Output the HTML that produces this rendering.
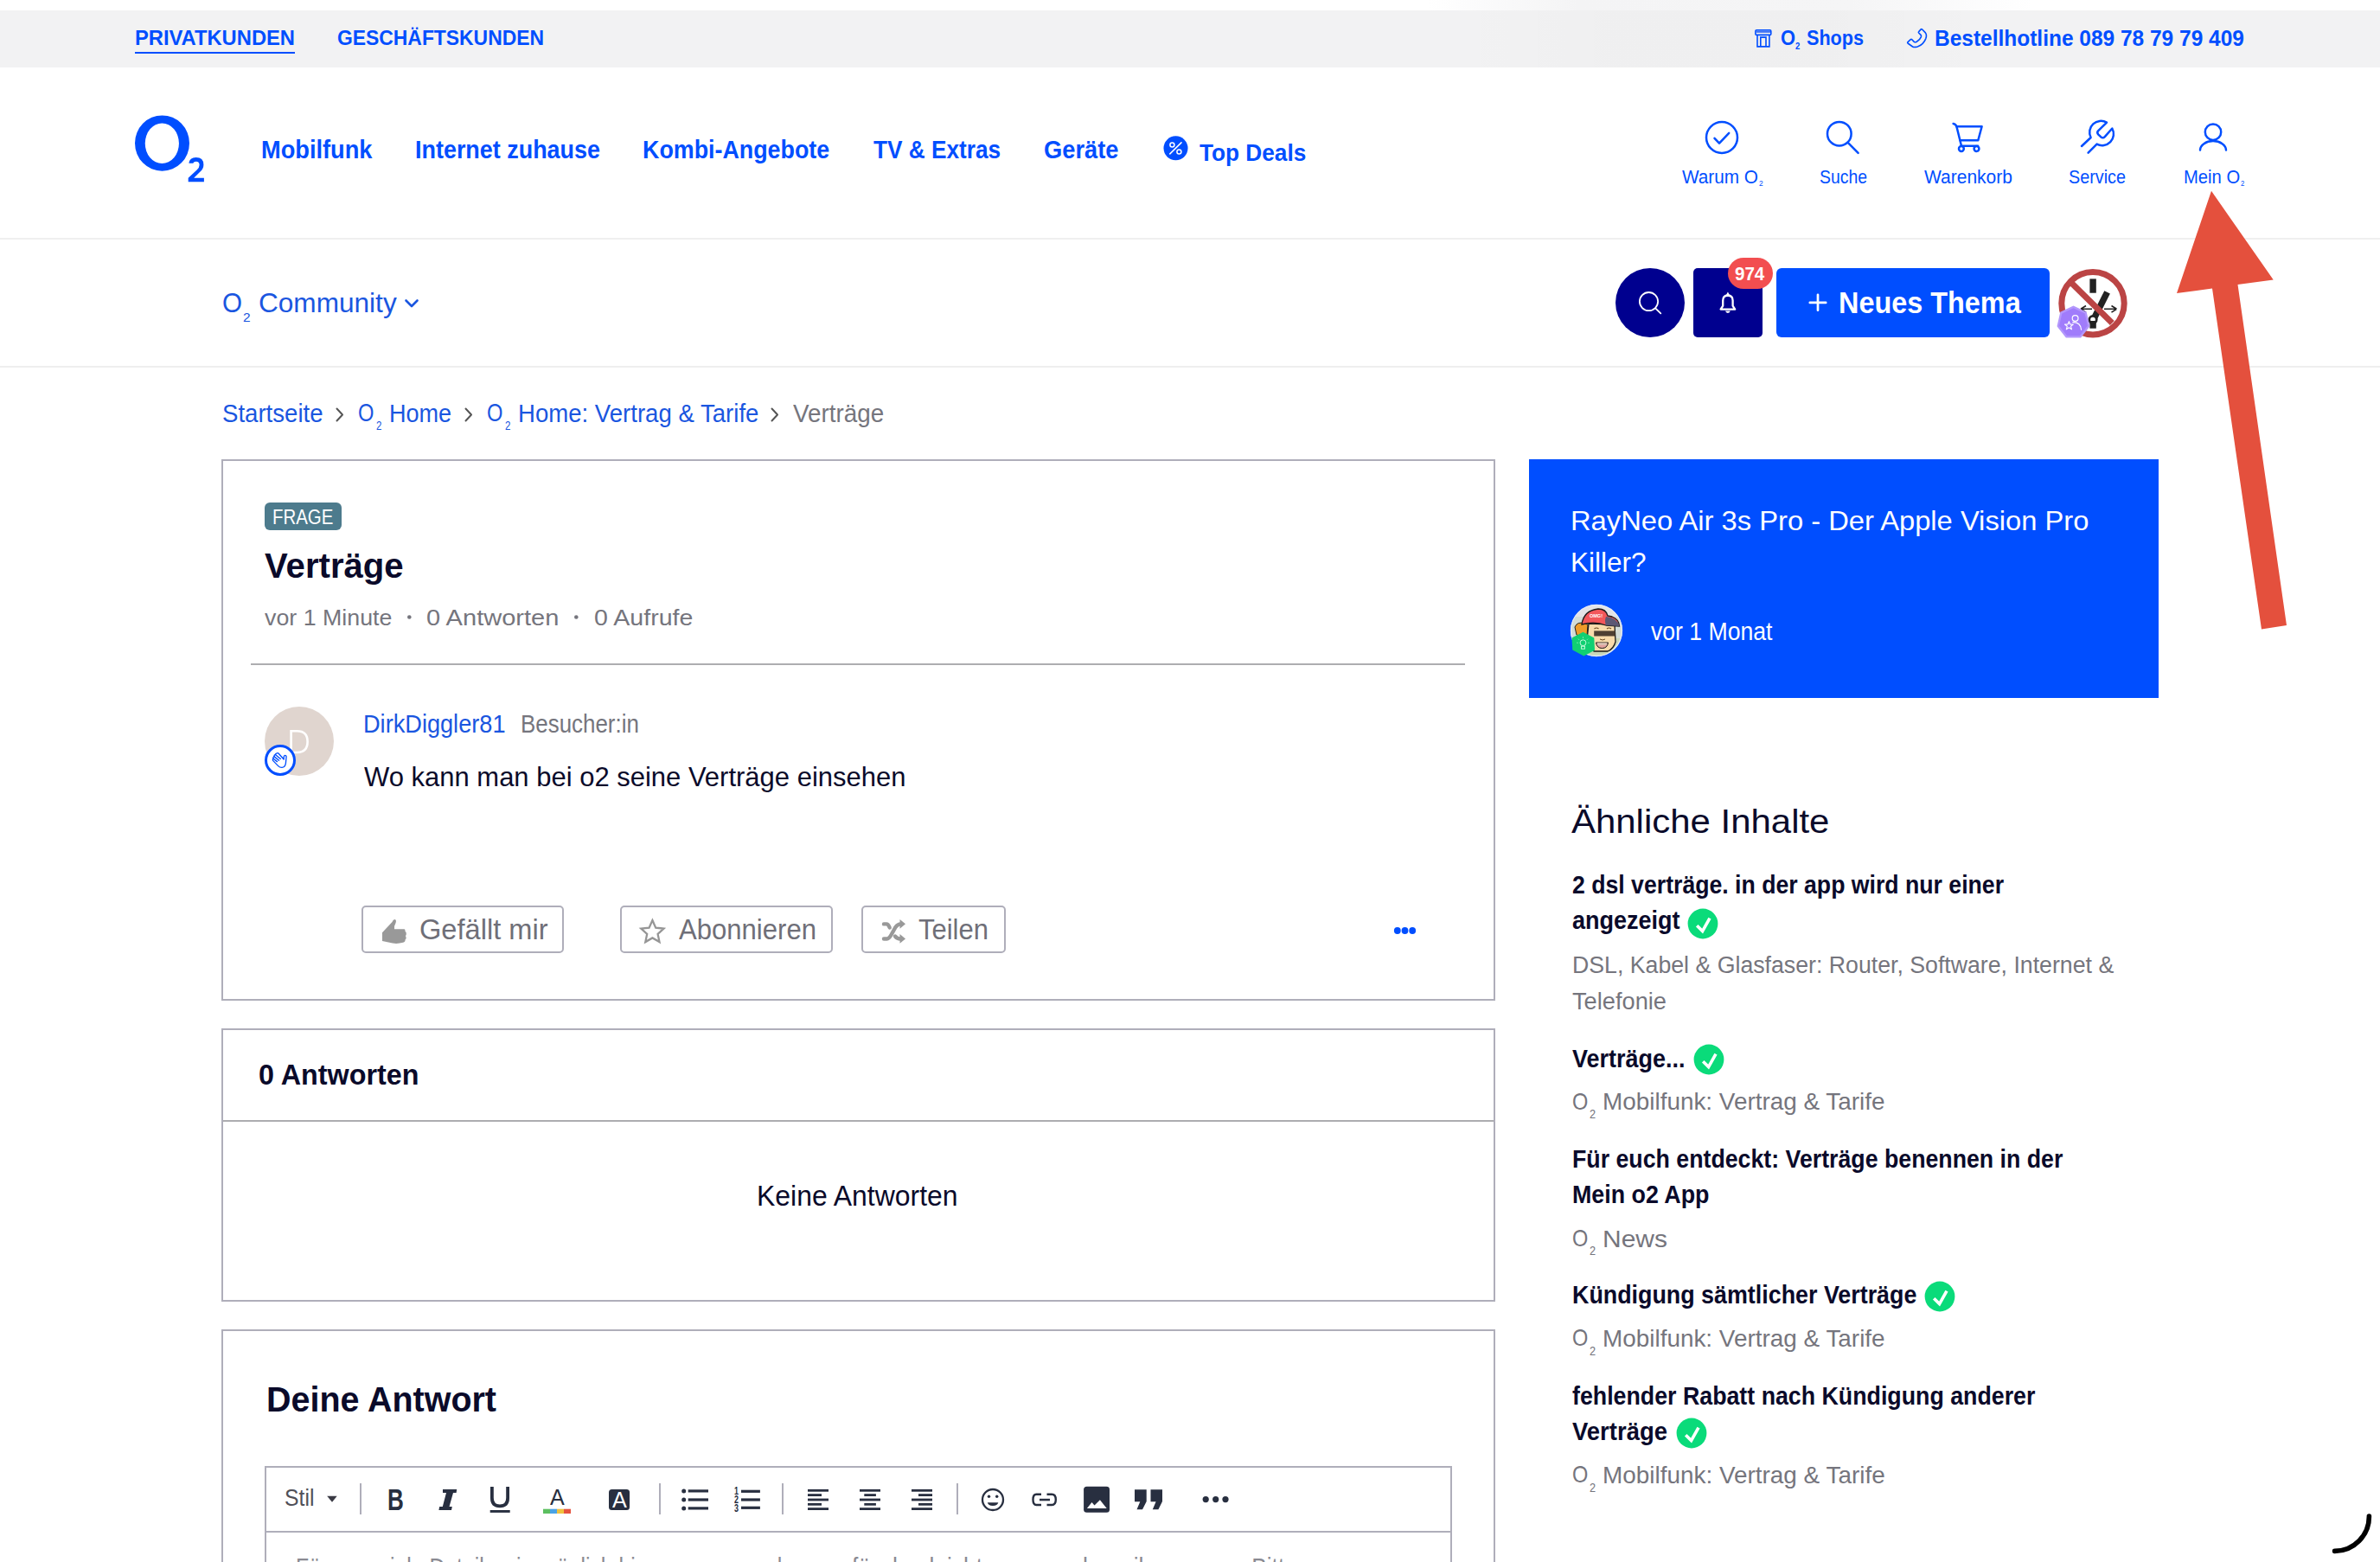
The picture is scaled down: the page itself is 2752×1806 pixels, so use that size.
<!DOCTYPE html>
<html><head><meta charset="utf-8"><title>O2 Community</title>
<style>
html,body{margin:0;padding:0;}
body{width:2752px;height:1806px;position:relative;overflow:hidden;background:#fff;font-family:"Liberation Sans",sans-serif;}
.t{position:absolute;white-space:nowrap;line-height:1;}
.r{position:absolute;box-sizing:border-box;}
.s{position:absolute;overflow:visible;}
</style></head><body>
<div class="r" style="left:1650px;top:0;width:700px;height:12px;background:linear-gradient(90deg,rgba(244,244,245,0) 0%,rgba(244,244,245,1) 25%,rgba(245,245,246,1) 70%,rgba(246,246,247,0) 100%);"></div>
<div class="r" style="left:0px;top:12px;width:2752px;height:66px;background:#f2f2f3;"></div>
<div class="r" style="left:1680px;top:12px;width:620px;height:66px;background:linear-gradient(90deg,rgba(0,0,0,0) 0%,rgba(0,0,0,0.012) 30%,rgba(0,0,0,0.012) 70%,rgba(0,0,0,0) 100%);"></div>
<div class="t" style="top:32.00px;font-size:24.80px;color:#004eff;font-weight:bold;left:156.00px;transform:scaleX(0.9569);transform-origin:0 0;">PRIVATKUNDEN</div>
<div class="r" style="left:156px;top:60px;width:185px;height:2px;background:#004eff;"></div>
<div class="t" style="top:32.00px;font-size:24.80px;color:#004eff;font-weight:bold;left:390.00px;transform:scaleX(0.9227);transform-origin:0 0;">GESCHÄFTSKUNDEN</div>
<svg class="s" style="left:2020px;top:28px;" width="40" height="32" viewBox="0 0 40 32"><rect x="9.9" y="6.8" width="17.9" height="5.6" rx="1.2" fill="none" stroke="#004eff" stroke-width="1.6"/><rect x="10.6" y="7.6" width="16.5" height="2.2" fill="#3b6ff5"/><path d="M12 12.4 V25.9 H25.9 V12.4" fill="none" stroke="#004eff" stroke-width="1.6"/><path d="M15.8 25.9 V15.1 H22 V25.9" fill="none" stroke="#004eff" stroke-width="1.6"/></svg>
<div class="t" style="top:32.00px;font-size:24.80px;color:#004eff;font-weight:bold;left:2058.60px;transform:scaleX(0.8811);transform-origin:0 0;">O</div>
<div class="t" style="top:49.00px;font-size:10.40px;color:#004eff;font-weight:bold;left:2076.20px;transform:scaleX(0.9166);transform-origin:0 0;">2</div>
<div class="t" style="top:32.00px;font-size:24.80px;color:#004eff;font-weight:bold;left:2089.00px;transform:scaleX(0.8708);transform-origin:0 0;">Shops</div>
<svg class="s" style="left:2198px;top:28px;" width="36" height="32" viewBox="0 0 36 32"><path d="M24.4 5.8 L28.4 9.9 Q30.3 12.2 28.8 16.6 Q26 23.8 19.2 26 Q15.6 27 13.6 26 L8 22 Q7.3 21.3 8 20.6 L11.3 17.6 Q12 17 12.8 17.7 L15.3 20.4 Q16.5 21.2 18.3 20.3 Q22 18 23.4 14.6 Q23.8 13.3 23 12.4 L20.6 10 Q20 9.3 20.7 8.6 L23.2 5.9 Q23.8 5.3 24.4 5.8 Z" fill="none" stroke="#004eff" stroke-width="1.6" stroke-linejoin="round"/></svg>
<div class="t" style="top:32.00px;font-size:25.60px;color:#004eff;font-weight:bold;left:2237.00px;transform:scaleX(0.9565);transform-origin:0 0;">Bestellhotline 089 78 79 79 409</div>
<svg class="s" style="left:150px;top:128px;" width="95" height="90" viewBox="0 0 95 90"><path fill-rule="evenodd" fill="#004eff" d="M37.5 5.4 A31.5 32.2 0 1 1 37.5 69.8 A31.5 32.2 0 1 1 37.5 5.4 Z M37.35 14.5 A19.6 23.3 0 1 0 37.35 61.1 A19.6 23.3 0 1 0 37.35 14.5 Z"/><path d="M68.4 60.8 L73.3 60.8 Q74 58.7 76.6 58.7 Q80.6 58.7 80.6 62.7 Q80.6 65.6 77.6 68.6 L67.7 77.8 L67.7 82.3 L85.9 82.3 L85.9 77.8 L74.2 77.8 L81.5 70.6 Q85.4 66.8 85.4 62.4 Q85.4 54 76.6 54 Q69.2 54 68.4 60.8 Z" fill="#004eff"/></svg>
<div class="r" style="left:0px;top:275px;width:2752px;height:2px;background:#efefef;"></div>
<div class="t" style="top:159.00px;font-size:29.00px;color:#004eff;font-weight:bold;left:301.50px;transform:scaleX(0.9382);transform-origin:0 0;">Mobilfunk</div>
<div class="t" style="top:159.00px;font-size:29.00px;color:#004eff;font-weight:bold;left:480.00px;transform:scaleX(0.9287);transform-origin:0 0;">Internet zuhause</div>
<div class="t" style="top:159.00px;font-size:29.00px;color:#004eff;font-weight:bold;left:743.40px;transform:scaleX(0.9255);transform-origin:0 0;">Kombi-Angebote</div>
<div class="t" style="top:159.00px;font-size:29.00px;color:#004eff;font-weight:bold;left:1010.00px;transform:scaleX(0.9031);transform-origin:0 0;">TV &amp; Extras</div>
<div class="t" style="top:159.00px;font-size:29.00px;color:#004eff;font-weight:bold;left:1206.60px;transform:scaleX(0.9404);transform-origin:0 0;">Geräte</div>
<svg class="s" style="left:1340px;top:152px;" width="40" height="40" viewBox="0 0 40 40"><circle cx="19.5" cy="19.3" r="14" fill="#004eff"/><circle cx="15.4" cy="15.6" r="2.5" fill="none" stroke="#fff" stroke-width="1.5"/><circle cx="23.4" cy="23.5" r="2.5" fill="none" stroke="#fff" stroke-width="1.5"/><line x1="12.8" y1="25.9" x2="26" y2="12.9" stroke="#fff" stroke-width="1.5" stroke-linecap="round"/></svg>
<div class="t" style="top:163.00px;font-size:28.00px;color:#004eff;font-weight:bold;left:1386.50px;transform:scaleX(0.9359);transform-origin:0 0;">Top Deals</div>
<svg class="s" style="left:1960px;top:130px;" width="200" height="60" viewBox="0 0 200 60"><circle cx="31" cy="29" r="18" fill="none" stroke="#004eff" stroke-width="2.5" stroke-linecap="round" stroke-linejoin="round"/><path d="M22.5 29.8 L28 35.6 L39.2 23.8" fill="none" stroke="#004eff" stroke-width="2.5" stroke-linecap="round" stroke-linejoin="round"/><circle cx="166.8" cy="24.7" r="13.8" fill="none" stroke="#004eff" stroke-width="2.5" stroke-linecap="round" stroke-linejoin="round"/><line x1="176.7" y1="34.8" x2="188.6" y2="46.8" fill="none" stroke="#004eff" stroke-width="2.5" stroke-linecap="round" stroke-linejoin="round"/></svg>
<svg class="s" style="left:2250px;top:130px;" width="200" height="60" viewBox="0 0 200 60"><path d="M8.6 13 Q11.3 13.4 12.4 16.3 L18 38.7 L37.1 38.7" fill="none" stroke="#004eff" stroke-width="2.5" stroke-linecap="round" stroke-linejoin="round"/><path d="M12.4 16.3 L41.6 16.3 L37.3 32.3 L16.6 32.3" fill="none" stroke="#004eff" stroke-width="2.5" stroke-linecap="round" stroke-linejoin="round"/><circle cx="17.9" cy="42" r="2.9" fill="none" stroke="#004eff" stroke-width="2.5" stroke-linecap="round" stroke-linejoin="round"/><circle cx="35.5" cy="42" r="2.9" fill="none" stroke="#004eff" stroke-width="2.5" stroke-linecap="round" stroke-linejoin="round"/><path d="M157 39 L167.6 29 A13.2 13.2 0 0 1 186 11.6 L176 21.3 Q174.3 23.5 176.4 25.6 L179.4 28.4 Q181.7 30.2 183.8 28.1 L192.3 18.5 A13.2 13.2 0 0 1 174.6 36.6 L164.6 46.6" fill="none" stroke="#004eff" stroke-width="2.5" stroke-linecap="round" stroke-linejoin="round"/></svg>
<svg class="s" style="left:2520px;top:130px;" width="100" height="60" viewBox="0 0 100 60"><circle cx="39" cy="22.7" r="9.2" fill="none" stroke="#004eff" stroke-width="2.5" stroke-linecap="round" stroke-linejoin="round"/><path d="M24 43.6 A15 10.5 0 0 1 54 43.6" fill="none" stroke="#004eff" stroke-width="2.5" stroke-linecap="round" stroke-linejoin="round"/></svg>
<div class="t" style="top:194.00px;font-size:21.60px;color:#004eff;left:1945.00px;transform:scaleX(0.9606);transform-origin:0 0;">Warum O</div>
<div class="t" style="top:194.00px;font-size:21.60px;color:#004eff;left:2104.00px;transform:scaleX(0.8982);transform-origin:0 0;">Suche</div>
<div class="t" style="top:194.00px;font-size:21.60px;color:#004eff;left:2225.00px;transform:scaleX(0.9729);transform-origin:0 0;">Warenkorb</div>
<div class="t" style="top:194.00px;font-size:21.60px;color:#004eff;left:2392.00px;transform:scaleX(0.9162);transform-origin:0 0;">Service</div>
<div class="t" style="top:194.00px;font-size:21.60px;color:#004eff;left:2524.80px;transform:scaleX(0.9351);transform-origin:0 0;">Mein O</div>
<div class="t" style="top:207.00px;font-size:9.40px;color:#004eff;left:2034.00px;transform:scaleX(0.8993);transform-origin:0 0;">2</div>
<div class="t" style="top:207.00px;font-size:9.40px;color:#004eff;left:2590.80px;transform:scaleX(0.8227);transform-origin:0 0;">2</div>
<div class="r" style="left:0px;top:423px;width:2752px;height:2px;background:#eeeeee;"></div>
<div class="t" style="top:335.00px;font-size:31.80px;color:#1a56e0;left:257.00px;transform:scaleX(0.9297);transform-origin:0 0;">O</div>
<div class="t" style="top:360.00px;font-size:14.00px;color:#1a56e0;left:281.20px;transform:scaleX(1.1048);transform-origin:0 0;">2</div>
<div class="t" style="top:335.00px;font-size:31.80px;color:#1a56e0;left:298.70px;transform:scaleX(0.9931);transform-origin:0 0;">Community</div>
<svg class="s" style="left:460px;top:336px;" width="30" height="30" viewBox="0 0 30 30"><path d="M9.5 11.5 L16 18 L22.5 11.5" fill="none" stroke="#1a56e0" stroke-width="2.6" stroke-linecap="round" stroke-linejoin="round"/></svg>
<svg class="s" style="left:1860px;top:300px;" width="200" height="100" viewBox="0 0 200 100"><circle cx="48" cy="50" r="40" fill="#00008f"/><circle cx="46.5" cy="48.6" r="10.6" fill="none" stroke="#fff" stroke-width="1.8"/><line x1="54.4" y1="56.6" x2="60.3" y2="62.4" stroke="#fff" stroke-width="1.8" stroke-linecap="round"/><rect x="98" y="10" width="80" height="80" rx="5" fill="#00008f"/><path d="M129.6 57.6 L132.2 53.6 L132.2 47.4 Q132.2 41.8 137.9 41.5 Q143.6 41.8 143.6 47.4 L143.6 53.6 L146.2 57.6 Z" fill="none" stroke="#fff" stroke-width="2.3" stroke-linejoin="round"/><path d="M137.9 37.6 L140 41.2 L135.8 41.2 Z" fill="#fff"/><path d="M135 59.6 L140.8 59.6 Q140.2 62 137.9 62 Q135.6 62 135 59.6 Z" fill="#fff"/></svg>
<div class="r" style="left:1998px;top:298px;width:52px;height:36px;border-radius:18px;background:#f24e50;"></div>
<div class="t" style="top:306.00px;font-size:21.60px;color:#fff;font-weight:bold;left:2006.00px;transform:scaleX(0.9520);transform-origin:0 0;">974</div>
<div class="r" style="left:2054px;top:310px;width:316px;height:80px;border-radius:6px;background:#004eff;"></div>
<svg class="s" style="left:2085px;top:330px;" width="35" height="40" viewBox="0 0 35 40"><path d="M17 10.8 V28.7 M7.8 19.9 H26.2" stroke="#fff" stroke-width="2.7" stroke-linecap="round"/></svg>
<div class="t" style="top:333.00px;font-size:34.60px;color:#fff;font-weight:bold;left:2126.00px;transform:scaleX(0.9369);transform-origin:0 0;">Neues Thema</div>
<svg class="s" style="left:2370px;top:300px;" width="100" height="100" viewBox="0 0 100 100"><circle cx="50" cy="50.7" r="39.7" fill="#fff"/><rect x="46.4" y="22.4" width="7.4" height="16.3" fill="#222"/><line x1="66.6" y1="37.8" x2="50.5" y2="69.8" stroke="#222" stroke-width="7.4"/><circle cx="50" cy="69.6" r="5.6" fill="#222"/><circle cx="50" cy="69.6" r="2.8" fill="#fff"/><rect x="46.4" y="71" width="7.4" height="8.7" fill="#222"/><path d="M36 57.3 H49 M36 57.3 L42 53.5 M36 57.3 L42 61.1 M63 57.3 H77.5 M77.5 57.3 L71.5 53.5 M77.5 57.3 L71.5 61.1" stroke="#222" stroke-width="1.6" fill="none"/><circle cx="50" cy="50.7" r="36.2" fill="none" stroke="#bb4444" stroke-width="7"/><line x1="25.6" y1="27.5" x2="72.3" y2="73.6" stroke="#bb4444" stroke-width="7"/><path d="M27.5 54.8 L41.7 61.7 L45.2 77.0 L35.4 89.4 L19.6 89.4 L9.8 77.0 L13.3 61.7 Z" fill="#a07cfb" stroke="#b397fc" stroke-width="2.4" stroke-linejoin="round"/><circle cx="29.6" cy="68" r="3.4" fill="none" stroke="#fff" stroke-width="1.2"/><path d="M26.8 72.6 Q35.8 72.4 36.6 81.2" fill="none" stroke="#fff" stroke-width="1.2" stroke-linecap="round"/><path d="M22.4 71.6 L23.7 75 L27.3 75.1 L24.5 77.3 L25.5 80.8 L22.4 78.7 L19.3 80.8 L20.3 77.3 L17.5 75.1 L21.1 75 Z" fill="none" stroke="#fff" stroke-width="1.1" stroke-linejoin="round"/></svg>
<div class="t" style="top:464.00px;font-size:29.20px;color:#1a56e0;left:256.80px;transform:scaleX(0.9453);transform-origin:0 0;">Startseite</div>
<svg class="s" style="left:380px;top:465px;" width="30" height="30" viewBox="0 0 30 30"><path d="M9.5 7.5 L16 14.5 L9.5 21.5" fill="none" stroke="#555" stroke-width="2" stroke-linecap="round" stroke-linejoin="round"/></svg>
<div class="t" style="top:463.00px;font-size:28.60px;color:#1a56e0;left:413.80px;transform:scaleX(0.8269);transform-origin:0 0;">O</div>
<div class="t" style="top:485.00px;font-size:14.80px;color:#1a56e0;left:434.70px;transform:scaleX(0.7778);transform-origin:0 0;">2</div>
<div class="t" style="top:464.00px;font-size:29.20px;color:#1a56e0;left:449.50px;transform:scaleX(0.9268);transform-origin:0 0;">Home</div>
<svg class="s" style="left:529px;top:465px;" width="30" height="30" viewBox="0 0 30 30"><path d="M9.5 7.5 L16 14.5 L9.5 21.5" fill="none" stroke="#555" stroke-width="2" stroke-linecap="round" stroke-linejoin="round"/></svg>
<div class="t" style="top:463.00px;font-size:28.60px;color:#1a56e0;left:562.80px;transform:scaleX(0.8269);transform-origin:0 0;">O</div>
<div class="t" style="top:485.00px;font-size:14.80px;color:#1a56e0;left:583.70px;transform:scaleX(0.7778);transform-origin:0 0;">2</div>
<div class="t" style="top:464.00px;font-size:29.20px;color:#1a56e0;left:598.50px;transform:scaleX(0.9446);transform-origin:0 0;">Home: Vertrag &amp; Tarife</div>
<svg class="s" style="left:883px;top:465px;" width="30" height="30" viewBox="0 0 30 30"><path d="M9.5 7.5 L16 14.5 L9.5 21.5" fill="none" stroke="#555" stroke-width="2" stroke-linecap="round" stroke-linejoin="round"/></svg>
<div class="t" style="top:464.00px;font-size:29.20px;color:#75757d;left:917.30px;transform:scaleX(0.9531);transform-origin:0 0;">Verträge</div>
<div class="r" style="left:256px;top:531px;width:1473px;height:626px;border:2px solid #afaeba;"></div>
<div class="r" style="left:306px;top:581px;width:89px;height:32px;border-radius:6px;background:#4d7b8d;"></div>
<div class="t" style="top:587.00px;font-size:23.20px;color:#fff;left:315.00px;transform:scaleX(0.8808);transform-origin:0 0;">FRAGE</div>
<div class="t" style="top:635.00px;font-size:40.20px;color:#0a0a2a;font-weight:bold;left:306.00px;transform:scaleX(0.9989);transform-origin:0 0;">Verträge</div>
<div class="t" style="top:701.00px;font-size:26.40px;color:#75757d;left:306.00px;transform:scaleX(1.0148);transform-origin:0 0;">vor 1 Minute</div>
<div class="t" style="top:701.00px;font-size:26.40px;color:#75757d;left:493.30px;transform:scaleX(1.1003);transform-origin:0 0;">0 Antworten</div>
<div class="t" style="top:701.00px;font-size:26.40px;color:#75757d;left:686.60px;transform:scaleX(1.0825);transform-origin:0 0;">0 Aufrufe</div>
<svg class="s" style="left:466px;top:709px;" width="220" height="20" viewBox="0 0 220 20"><circle cx="7.3" cy="4.5" r="2.3" fill="#75757d"/><circle cx="200.3" cy="4.5" r="2.3" fill="#75757d"/></svg>
<div class="r" style="left:290px;top:767px;width:1404px;height:2px;background:#adadb0;"></div>
<svg class="s" style="left:300px;top:810px;" width="100" height="95" viewBox="0 0 100 95"><circle cx="46" cy="47" r="40" fill="#e0d5cf"/><path d="M36.6 35.2 L43.5 35.2 Q55.6 35.2 55.6 47.6 Q55.6 60 43.5 60 L36.6 60 Z" fill="none" stroke="#fff" stroke-width="2.6"/><circle cx="24" cy="69" r="16.5" fill="#fff" stroke="#004eff" stroke-width="3"/><g transform="translate(6,51)" fill="none" stroke="#004eff" stroke-width="1.35" stroke-linecap="round" stroke-linejoin="round"><path d="M22.2 17 L16.2 10.2 Q15.4 9.3 14.2 9.8 Q12.6 10.3 12.4 11.5 Q10.8 11.8 10.9 13.6 Q9.6 14.2 9.9 16 Q9 16.8 9.6 18.4 L15.7 24.6 Q17.5 26.5 20 26.4 Q23.8 26 24.4 21.5 L25.1 13.8 Q25 12.3 23.6 12.3 Q22.3 12.4 22.2 14 Z"/><path d="M12.4 11.5 L18.4 16.4 M10.9 13.6 L16.6 18.2 M9.9 16 L14.5 19.6"/></g></svg>
<div class="t" style="top:823.00px;font-size:29.00px;color:#1a56e0;left:419.50px;transform:scaleX(0.9364);transform-origin:0 0;">DirkDiggler81</div>
<div class="t" style="top:823.00px;font-size:29.00px;color:#75757d;left:602.00px;transform:scaleX(0.8932);transform-origin:0 0;">Besucher:in</div>
<div class="t" style="top:883.00px;font-size:31.60px;color:#0a0a2a;left:420.50px;transform:scaleX(0.9807);transform-origin:0 0;">Wo kann man bei o2 seine Verträge einsehen</div>
<div class="r" style="left:418px;top:1047px;width:234px;height:55px;border:2px solid #afaeba;border-radius:5px;"></div>
<div class="r" style="left:717px;top:1047px;width:246px;height:55px;border:2px solid #afaeba;border-radius:5px;"></div>
<div class="r" style="left:996px;top:1047px;width:167px;height:55px;border:2px solid #afaeba;border-radius:5px;"></div>
<div class="t" style="top:1058.00px;font-size:33.20px;color:#6f6f78;left:485.00px;transform:scaleX(0.9824);transform-origin:0 0;">Gefällt mir</div>
<div class="t" style="top:1058.00px;font-size:33.20px;color:#6f6f78;left:785.00px;transform:scaleX(0.9363);transform-origin:0 0;">Abonnieren</div>
<div class="t" style="top:1058.00px;font-size:33.20px;color:#6f6f78;left:1062.00px;transform:scaleX(0.9337);transform-origin:0 0;">Teilen</div>
<svg class="s" style="left:430px;top:1050px;" width="60" height="50" viewBox="0 0 60 50"><path d="M12 28.2 L23.5 16 Q24.5 13 26.6 13 Q28.6 13.6 27.6 17 L26 21 L26 24.3 L37.6 24.3 Q38.6 24.6 38.6 27 Q40 27.5 39.8 30 Q39.6 32 38.8 32 Q39.8 33 39.6 35 Q39.2 36.2 38.5 36.5 Q39 38.8 36 39.8 Q30 41.5 24 40.6 L12 38 Z" fill="#999"/></svg>
<svg class="s" style="left:730px;top:1050px;" width="60" height="50" viewBox="0 0 60 50"><path d="M24.4 14 L28.2 22.6 L37.5 23.6 L30.6 29.9 L32.5 39.1 L24.4 34.4 L16.3 39.1 L18.2 29.9 L11.3 23.6 L20.6 22.6 Z" fill="none" stroke="#969696" stroke-width="2.3" stroke-linejoin="miter"/></svg>
<svg class="s" style="left:1005px;top:1050px;" width="60" height="50" viewBox="0 0 60 50"><path d="M17 18.4 L20 18.4 Q22 18.4 23.7 22.5" fill="none" stroke="#999" stroke-width="4.4" stroke-linecap="round"/><path d="M17 35.5 L20.5 35.5 Q23 35.5 26 30 L30.5 22 Q33 18.4 36.5 18.4 L37 18.4" fill="none" stroke="#999" stroke-width="4.4" stroke-linecap="round"/><path d="M35.5 13 L42 18.2 L35.5 23.7 Z" fill="#999"/><path d="M30 32.5 Q32.5 35.5 36 35.5 L37 35.5" fill="none" stroke="#999" stroke-width="4.4" stroke-linecap="round"/><path d="M35.5 30 L42 35.4 L35.5 40.8 Z" fill="#999"/></svg>
<svg class="s" style="left:1605px;top:1066px;" width="40" height="20" viewBox="0 0 40 20"><circle cx="10.8" cy="10" r="3.9" fill="#004eff"/><circle cx="19.5" cy="10" r="3.9" fill="#004eff"/><circle cx="28.2" cy="10" r="3.9" fill="#004eff"/></svg>
<div class="r" style="left:256px;top:1189px;width:1473px;height:316px;border:2px solid #afaeba;"></div>
<div class="r" style="left:258px;top:1295px;width:1469px;height:2px;background:#adadb0;"></div>
<div class="t" style="top:1226.00px;font-size:33.00px;color:#0a0a2a;font-weight:bold;left:298.60px;transform:scaleX(0.9786);transform-origin:0 0;">0 Antworten</div>
<div class="t" style="top:1366.00px;font-size:33.00px;color:#0a0a2a;left:875.40px;transform:scaleX(0.9678);transform-origin:0 0;">Keine Antworten</div>
<div class="r" style="left:256px;top:1537px;width:1473px;height:400px;border:2px solid #afaeba;"></div>
<div class="t" style="top:1598.00px;font-size:40.80px;color:#0a0a2a;font-weight:bold;left:307.70px;transform:scaleX(0.9672);transform-origin:0 0;">Deine Antwort</div>
<div class="r" style="left:306px;top:1695px;width:1373px;height:300px;border:2px solid #afaeba;"></div>
<div class="r" style="left:306px;top:1770px;width:1373px;height:2px;background:#afaeba;"></div>
<div class="t" style="top:1719.00px;font-size:27.00px;color:#505058;left:328.80px;transform:scaleX(0.9173);transform-origin:0 0;">Stil</div>
<svg class="s" style="left:370px;top:1720px;" width="30" height="30" viewBox="0 0 30 30"><path d="M8.2 9.7 L19.7 9.7 L14 16.8 Z" fill="#3a3a44"/></svg>
<div class="r" style="left:415.7px;top:1715px;width:2.0px;height:36px;background:#afaeba;"></div>
<div class="r" style="left:761.7px;top:1715px;width:2.0px;height:36px;background:#afaeba;"></div>
<div class="r" style="left:903.7px;top:1715px;width:2.0px;height:36px;background:#afaeba;"></div>
<div class="r" style="left:1105.7px;top:1715px;width:2.0px;height:36px;background:#afaeba;"></div>
<div class="t" style="top:1717.00px;font-size:34.80px;color:#282f40;font-weight:bold;left:448.00px;transform:scaleX(0.7482);transform-origin:0 0;">B</div>
<svg class="s" style="left:500px;top:1715px;" width="40" height="40" viewBox="0 0 40 40"><path d="M12 7 H28.2 L27.6 11 H24 L19.5 27 H22.8 L22 31 H7.4 L8.2 27 H11.8 L16 11 H12 Z" fill="#282f40" transform="translate(0,0)"/></svg>
<svg class="s" style="left:560px;top:1715px;" width="40" height="40" viewBox="0 0 40 40"><path d="M8.9 4.1 V17 Q8.9 26.3 18 26.3 Q27.1 26.3 27.1 17 V4.1" fill="none" stroke="#282f40" stroke-width="3.8"/><rect x="6.7" y="31" width="23" height="2.9" fill="#282f40"/></svg>
<div class="t" style="top:1718.00px;font-size:26.60px;color:#282f40;left:635.90px;transform:scaleX(0.9413);transform-origin:0 0;">A</div>
<svg class="s" style="left:620px;top:1740px;" width="50" height="12" viewBox="0 0 50 12"><rect x="8" y="4.7" width="8" height="5.3" fill="#5cbf60"/><rect x="16" y="4.7" width="8" height="5.3" fill="#4aa3e6"/><rect x="24" y="4.7" width="8" height="5.3" fill="#f0c23e"/><rect x="32" y="4.7" width="8" height="5.3" fill="#e5533f"/></svg>
<div class="r" style="left:703.8px;top:1722px;width:24.2px;height:24px;border-radius:3.5px;background:#282f40;"></div>
<div class="t" style="top:1722.00px;font-size:25.40px;color:#fff;left:707.50px;transform:scaleX(0.9916);transform-origin:0 0;">A</div>
<svg class="s" style="left:770px;top:1715px;" width="120" height="40" viewBox="0 0 120 40"><circle cx="20.700000000000045" cy="8.900000000000091" r="2.5" fill="#282f40"/><rect x="25.700000000000045" y="7.300000000000091" width="23.3" height="3.2" fill="#282f40"/><circle cx="20.700000000000045" cy="19" r="2.5" fill="#282f40"/><rect x="25.700000000000045" y="17.4" width="23.3" height="3.2" fill="#282f40"/><circle cx="20.700000000000045" cy="28.90000000000009" r="2.5" fill="#282f40"/><rect x="25.700000000000045" y="27.30000000000009" width="23.3" height="3.2" fill="#282f40"/><rect x="87" y="7.699999999999955" width="21.9" height="3.2" fill="#282f40"/><rect x="87" y="17.4" width="21.9" height="3.2" fill="#282f40"/><rect x="87" y="26.699999999999953" width="21.9" height="3.2" fill="#282f40"/></svg>
<div class="t" style="top:1717.00px;font-size:13.00px;color:#282f40;font-weight:bold;left:849.30px;transform:scaleX(0.6918);transform-origin:0 0;">1</div>
<div class="t" style="top:1727.00px;font-size:13.00px;color:#282f40;font-weight:bold;left:849.30px;transform:scaleX(0.6918);transform-origin:0 0;">2</div>
<div class="t" style="top:1737.00px;font-size:13.00px;color:#282f40;font-weight:bold;left:849.30px;transform:scaleX(0.6918);transform-origin:0 0;">3</div>
<svg class="s" style="left:920px;top:1715px;" width="170" height="40" viewBox="0 0 170 40"><rect x="14" y="6.899999999999954" width="24" height="2.8" fill="#282f40"/><rect x="74" y="6.899999999999954" width="24" height="2.8" fill="#282f40"/><rect x="134" y="6.899999999999954" width="24" height="2.8" fill="#282f40"/><rect x="14" y="12.199999999999909" width="16" height="2.8" fill="#282f40"/><rect x="79.29999999999995" y="12.199999999999909" width="13.6" height="2.8" fill="#282f40"/><rect x="142" y="12.199999999999909" width="16" height="2.8" fill="#282f40"/><rect x="14" y="17.6" width="24" height="2.8" fill="#282f40"/><rect x="74" y="17.6" width="24" height="2.8" fill="#282f40"/><rect x="134" y="17.6" width="24" height="2.8" fill="#282f40"/><rect x="14" y="22.899999999999956" width="16" height="2.8" fill="#282f40"/><rect x="79.29999999999995" y="22.899999999999956" width="13.6" height="2.8" fill="#282f40"/><rect x="142" y="22.899999999999956" width="16" height="2.8" fill="#282f40"/><rect x="14" y="28.19999999999991" width="24" height="2.8" fill="#282f40"/><rect x="74" y="28.19999999999991" width="24" height="2.8" fill="#282f40"/><rect x="134" y="28.19999999999991" width="24" height="2.8" fill="#282f40"/></svg>
<svg class="s" style="left:1120px;top:1710px;" width="320" height="50" viewBox="0 0 320 50"><circle cx="28" cy="24" r="12" fill="none" stroke="#282f40" stroke-width="2.3"/><circle cx="23.5" cy="20.3" r="1.7" fill="#282f40"/><circle cx="32.7" cy="20.3" r="1.7" fill="#282f40"/><path d="M21.8 27.3 H34.3 Q33.5 31 28 31 Q22.6 31 21.8 27.3 Z" fill="#282f40"/><path d="M84 17.8 H78.3 Q74.5 17.8 74.5 24 Q74.5 30 78.3 30 H84 M90.5 17.8 H96.2 Q100.8 17.8 100.8 24 Q100.8 30 96.2 30 H90.5" fill="none" stroke="#282f40" stroke-width="2.4"/><rect x="82" y="22.8" width="12" height="2.5" fill="#282f40"/><rect x="133.1" y="8.8" width="29.9" height="29.9" rx="3.5" fill="#282f40"/><path d="M136.9 34 L142.5 27 L145.5 30.4 L151.9 24.3 L159.7 34 Z" fill="#fff"/><path d="M192 12.2 H205.7 V26 L201 35.3 H194.5 L198.3 26.2 H192 Z M210.5 12.2 H224 V26 L219.4 35.3 H212.8 L216.6 26.2 H210.5 Z" fill="#282f40"/><circle cx="274.2" cy="23.6" r="3.6" fill="#282f40"/><circle cx="285.7" cy="23.6" r="3.6" fill="#282f40"/><circle cx="297" cy="23.6" r="3.6" fill="#282f40"/></svg>
<div class="t" style="top:1797.00px;font-size:29.80px;color:#8a8a92;left:342.00px;transform:scaleX(0.8322);transform-origin:0 0;">Füge so viele Details wie möglich hinzu, um es anderen</div>
<div class="t" style="top:1797.00px;font-size:29.80px;color:#8a8a92;left:985.00px;transform:scaleX(0.8858);transform-origin:0 0;">für den leichter zu machen, ihnen zu ... Bitte</div>
<div class="r" style="left:1768px;top:531px;width:728px;height:275.5px;background:#004eff;"></div>
<div class="t" style="top:587.00px;font-size:31.60px;color:#fff;left:1816.30px;transform:scaleX(1.0354);transform-origin:0 0;">RayNeo Air 3s Pro - Der Apple Vision Pro</div>
<div class="t" style="top:635.00px;font-size:31.40px;color:#fff;left:1816.30px;transform:scaleX(1.0027);transform-origin:0 0;">Killer?</div>
<svg class="s" style="left:1810px;top:692px;" width="80" height="75" viewBox="0 0 80 75"><defs><clipPath id="av"><circle cx="36" cy="37" r="29.5"/></clipPath></defs><circle cx="36" cy="37" r="30" fill="#d8dde2"/><g clip-path="url(#av)"><rect x="0" y="7" width="80" height="14" fill="#e4e4e6"/><rect x="0" y="21" width="80" height="25" fill="#d2dcd8"/><rect x="0" y="46" width="80" height="30" fill="#c8d6b8"/><path d="M11 33 Q14 26 22 29 L26 30 L25 44 Q18 46 13 42 Z" fill="#ee9b2a" stroke="#222" stroke-width="1"/><path d="M27 29 L57 30 L58 50 Q56 58 49 61 L33 61 Q26 57 25 48 Z" fill="#f8dbab" stroke="#1a1a1a" stroke-width="1.3"/><path d="M19 30 Q21 14 38 12 Q47 12 49 20 L54 21 Q62 24 62.5 32 L47 31 Q34 26 19 30 Z" fill="#f2575b" stroke="#1a1a1a" stroke-width="1.3"/><path d="M47 21 Q60 22 62.5 32 L47 31 Q45 26 47 21 Z" fill="#5c5874"/><text x="28" y="21.5" font-family="Liberation Sans" font-weight="bold" font-size="5.5" fill="#fff">OMG!</text><path d="M33.5 35 Q36 33 38.5 35 M48 35 Q50.5 33 53 35" fill="none" stroke="#6a4a20" stroke-width="1.1"/><rect x="33.2" y="37.4" width="24.3" height="6.1" fill="#4e4033"/><path d="M40 47 Q43 49 46 47" fill="none" stroke="#6a4a20" stroke-width="1"/><path d="M35.5 51 L49.5 51 Q48.5 57.5 42.5 57.5 Q36.5 57.5 35.5 51 Z" fill="#e3a3a0" stroke="#1a1a1a" stroke-width="1"/><rect x="37" y="51.3" width="11" height="2.3" fill="#d9c7b8"/></g><circle cx="36" cy="37" r="29.5" fill="none" stroke="#e3e9f6" stroke-width="1.3"/><path d="M20.5 38.8 L33.3 45.6 L34 59.8 L21.4 66.4 L8.3 59.6 L7.5 45.4 Z" fill="#10cf72"/><circle cx="20.5" cy="51.2" r="3.4" fill="none" stroke="#d8ffe8" stroke-width="0.9"/><rect x="18.6" y="55.2" width="3.8" height="3" fill="none" stroke="#d8ffe8" stroke-width="0.9"/><path d="M20.5 44.5 V45.6 M15 46.8 L15.7 47.5 M26 46.8 L25.3 47.5 M13.5 51.2 H14.5 M26.5 51.2 H27.5" stroke="#d8ffe8" stroke-width="0.9"/></svg>
<div class="t" style="top:716.00px;font-size:29.20px;color:#fff;left:1908.50px;transform:scaleX(0.9113);transform-origin:0 0;">vor 1 Monat</div>
<div class="t" style="top:930.00px;font-size:39.60px;color:#0a0a2a;left:1817.40px;transform:scaleX(1.0596);transform-origin:0 0;">Ähnliche Inhalte</div>
<div class="t" style="top:1008.00px;font-size:30.00px;color:#0a0a2a;font-weight:bold;left:1817.50px;transform:scaleX(0.8882);transform-origin:0 0;">2 dsl verträge. in der app wird nur einer</div>
<div class="t" style="top:1049.00px;font-size:29.80px;color:#0a0a2a;font-weight:bold;left:1817.50px;transform:scaleX(0.9059);transform-origin:0 0;">angezeigt</div>
<svg class="s" style="left:1949.4px;top:1047.5px;" width="40" height="40" viewBox="0 0 40 40"><circle cx="20" cy="20" r="17.4" fill="#0adb7a"/><path d="M13.2 22.3 L19.6 28.6 L28 13.6" fill="none" stroke="#fff" stroke-width="3.6" stroke-linecap="butt" stroke-linejoin="miter"/></svg>
<div class="t" style="top:1101.00px;font-size:28.20px;color:#75757d;left:1817.50px;transform:scaleX(0.9471);transform-origin:0 0;">DSL, Kabel &amp; Glasfaser: Router, Software, Internet &amp;</div>
<div class="t" style="top:1143.00px;font-size:28.20px;color:#75757d;left:1817.50px;transform:scaleX(0.9656);transform-origin:0 0;">Telefonie</div>
<div class="t" style="top:1210.00px;font-size:29.00px;color:#0a0a2a;font-weight:bold;left:1817.50px;transform:scaleX(0.9305);transform-origin:0 0;">Verträge...</div>
<svg class="s" style="left:1955.5px;top:1205.4px;" width="40" height="40" viewBox="0 0 40 40"><circle cx="20" cy="20" r="17.4" fill="#0adb7a"/><path d="M13.2 22.3 L19.6 28.6 L28 13.6" fill="none" stroke="#fff" stroke-width="3.6" stroke-linecap="butt" stroke-linejoin="miter"/></svg>
<div class="t" style="top:1260.00px;font-size:27.40px;color:#75757d;left:1817.50px;transform:scaleX(0.8585);transform-origin:0 0;">O</div>
<div class="t" style="top:1281.00px;font-size:14.60px;color:#75757d;left:1838.00px;transform:scaleX(0.8746);transform-origin:0 0;">2</div>
<div class="t" style="top:1260.00px;font-size:27.40px;color:#75757d;left:1853.30px;transform:scaleX(1.0182);transform-origin:0 0;">Mobilfunk: Vertrag &amp; Tarife</div>
<div class="t" style="top:1326.00px;font-size:28.60px;color:#0a0a2a;font-weight:bold;left:1817.50px;transform:scaleX(0.9348);transform-origin:0 0;">Für euch entdeckt: Verträge benennen in der</div>
<div class="t" style="top:1367.00px;font-size:28.60px;color:#0a0a2a;font-weight:bold;left:1817.50px;transform:scaleX(0.9382);transform-origin:0 0;">Mein o2 App</div>
<div class="t" style="top:1418.00px;font-size:27.40px;color:#75757d;left:1817.50px;transform:scaleX(0.8585);transform-origin:0 0;">O</div>
<div class="t" style="top:1439.00px;font-size:14.60px;color:#75757d;left:1838.00px;transform:scaleX(0.8746);transform-origin:0 0;">2</div>
<div class="t" style="top:1419.00px;font-size:27.40px;color:#75757d;left:1853.30px;transform:scaleX(1.0945);transform-origin:0 0;">News</div>
<div class="t" style="top:1482.00px;font-size:29.40px;color:#0a0a2a;font-weight:bold;left:1817.50px;transform:scaleX(0.9136);transform-origin:0 0;">Kündigung sämtlicher Verträge</div>
<svg class="s" style="left:2222.5px;top:1479.2px;" width="40" height="40" viewBox="0 0 40 40"><circle cx="20" cy="20" r="17.4" fill="#0adb7a"/><path d="M13.2 22.3 L19.6 28.6 L28 13.6" fill="none" stroke="#fff" stroke-width="3.6" stroke-linecap="butt" stroke-linejoin="miter"/></svg>
<div class="t" style="top:1533.00px;font-size:27.60px;color:#75757d;left:1817.50px;transform:scaleX(0.8522);transform-origin:0 0;">O</div>
<div class="t" style="top:1555.00px;font-size:14.60px;color:#75757d;left:1838.00px;transform:scaleX(0.8746);transform-origin:0 0;">2</div>
<div class="t" style="top:1534.00px;font-size:27.60px;color:#75757d;left:1853.30px;transform:scaleX(1.0108);transform-origin:0 0;">Mobilfunk: Vertrag &amp; Tarife</div>
<div class="t" style="top:1600.00px;font-size:28.60px;color:#0a0a2a;font-weight:bold;left:1817.50px;transform:scaleX(0.9361);transform-origin:0 0;">fehlender Rabatt nach Kündigung anderer</div>
<div class="t" style="top:1641.00px;font-size:28.60px;color:#0a0a2a;font-weight:bold;left:1817.50px;transform:scaleX(0.9611);transform-origin:0 0;">Verträge</div>
<svg class="s" style="left:1935.5px;top:1637.4px;" width="40" height="40" viewBox="0 0 40 40"><circle cx="20" cy="20" r="17.4" fill="#0adb7a"/><path d="M13.2 22.3 L19.6 28.6 L28 13.6" fill="none" stroke="#fff" stroke-width="3.6" stroke-linecap="butt" stroke-linejoin="miter"/></svg>
<div class="t" style="top:1691.00px;font-size:28.00px;color:#75757d;left:1817.50px;transform:scaleX(0.8401);transform-origin:0 0;">O</div>
<div class="t" style="top:1713.00px;font-size:14.60px;color:#75757d;left:1838.00px;transform:scaleX(0.8746);transform-origin:0 0;">2</div>
<div class="t" style="top:1692.00px;font-size:28.00px;color:#75757d;left:1853.30px;transform:scaleX(0.9964);transform-origin:0 0;">Mobilfunk: Vertrag &amp; Tarife</div>
<svg class="s" style="left:2500px;top:200px;" width="200" height="560" viewBox="0 0 200 560"><path d="M57 20.8 L128.7 123.6 L87.5 129 L144 523 L115 527.4 L58 133.6 L17 139 Z" fill="#e4503d"/></svg>
<svg class="s" style="left:2680px;top:1730px;" width="72" height="76" viewBox="0 0 72 76"><path d="M59.4 23 A40 40 0 0 1 19.6 63.4" fill="none" stroke="#000" stroke-width="5.6" stroke-linecap="round"/></svg>
</body></html>
